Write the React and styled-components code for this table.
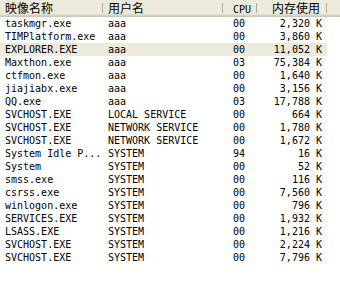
import React from "react";
import styled, { createGlobalStyle } from "styled-components";

const Global = createGlobalStyle`
  html, body { margin: 0; padding: 0; background: #fff; }
  body { width: 340px; height: 282px; overflow: hidden; }
`;

const COLS = "103px 120px 34px 70px";

const List = styled.div`
  width: 340px;
  height: 282px;
  background: #fff;
  font-family: "DejaVu Sans Mono", "Liberation Mono", "Noto Sans CJK SC", monospace;
  color: #000;
`;

const Header = styled.div`
  display: grid;
  grid-template-columns: ${COLS} 1fr;
  height: 17px;
  background: #ebeadb;
  box-shadow: inset 0 -1px #cbc7b8, inset 0 -2px #d6d2c2, inset 0 -3px #e2decd;
`;

const HeadCell = styled.div`
  position: relative;
  height: 17px;
  line-height: 16px;
  padding: 0 ${(p) => (p.$right ? "7px" : "0")} 0 ${(p) => (p.$pl ?? 5)}px;
  text-align: ${(p) => (p.$right ? "right" : "left")};
  font-family: "Noto Sans CJK SC", "DejaVu Sans Mono", sans-serif;
  font-size: 12px;
  white-space: nowrap;
  overflow: hidden;
  ${(p) =>
    p.$sep &&
    `
    &::after {
      content: "";
      position: absolute;
      right: 0;
      top: 3px;
      bottom: 4px;
      width: 1px;
      background: #aca899;
      box-shadow: 1px 0 #fff;
    }
  `}
`;

const MonoHead = styled.span`
  font-family: "DejaVu Sans Mono", "Liberation Mono", monospace;
  font-size: 10px;
`;

const Row = styled.div`
  display: grid;
  grid-template-columns: ${COLS};
  width: 327px;
  height: 13px;
  line-height: 13px;
  font-size: 10px;
  background: ${(p) => (p.$selected ? "#eceadb" : "transparent")};
`;

const Cell = styled.div`
  padding-left: ${(p) => p.$pl ?? 5}px;
  padding-right: ${(p) => (p.$right ? 5 : 0)}px;
  text-align: ${(p) => (p.$right ? "right" : "left")};
  white-space: nowrap;
  overflow: hidden;
`;

const rows = [
  ["taskmgr.exe", "aaa", "00", "2,320 K"],
  ["TIMPlatform.exe", "aaa", "00", "3,860 K"],
  ["EXPLORER.EXE", "aaa", "00", "11,052 K", true],
  ["Maxthon.exe", "aaa", "03", "75,384 K"],
  ["ctfmon.exe", "aaa", "00", "1,640 K"],
  ["jiajiabx.exe", "aaa", "00", "3,156 K"],
  ["QQ.exe", "aaa", "03", "17,788 K"],
  ["SVCHOST.EXE", "LOCAL SERVICE", "00", "664 K"],
  ["SVCHOST.EXE", "NETWORK SERVICE", "00", "1,780 K"],
  ["SVCHOST.EXE", "NETWORK SERVICE", "00", "1,672 K"],
  ["System Idle P...", "SYSTEM", "94", "16 K"],
  ["System", "SYSTEM", "00", "52 K"],
  ["smss.exe", "SYSTEM", "00", "116 K"],
  ["csrss.exe", "SYSTEM", "00", "7,560 K"],
  ["winlogon.exe", "SYSTEM", "00", "796 K"],
  ["SERVICES.EXE", "SYSTEM", "00", "1,932 K"],
  ["LSASS.EXE", "SYSTEM", "00", "1,216 K"],
  ["SVCHOST.EXE", "SYSTEM", "00", "2,224 K"],
  ["SVCHOST.EXE", "SYSTEM", "00", "7,796 K"],
];

export default function App() {
  return (
    <>
      <Global />
      <List>
        <Header>
          <HeadCell $sep>映像名称</HeadCell>
          <HeadCell $sep>用户名</HeadCell>
          <HeadCell $sep $pl={10}>
            <MonoHead>CPU</MonoHead>
          </HeadCell>
          <HeadCell $sep $right>内存使用</HeadCell>
          <HeadCell />
        </Header>
        {rows.map(([name, user, cpu, mem, sel], i) => (
          <Row key={i} $selected={sel}>
            <Cell>{name}</Cell>
            <Cell>{user}</Cell>
            <Cell $pl={10}>{cpu}</Cell>
            <Cell $right>{mem}</Cell>
          </Row>
        ))}
      </List>
    </>
  );
}
